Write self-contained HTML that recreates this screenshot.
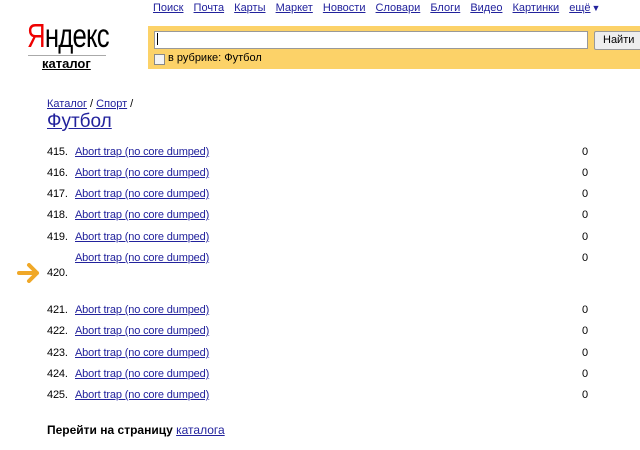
<!DOCTYPE html>
<html><head><meta charset="utf-8"><style>
*{margin:0;padding:0}
body{width:640px;height:450px;background:#fff;font-family:"Liberation Sans",Arial,sans-serif;font-size:11px;color:#000;position:relative;overflow:hidden}
a{color:#22229c;text-decoration:underline}
.abs{position:absolute;white-space:nowrap}
.nav a{margin-right:7px;font-size:11px}
.row{position:absolute;left:47px;font-size:11px;letter-spacing:-0.15px}
.row .n{display:inline-block;width:28px}
.z{position:absolute;left:582px;font-size:11px}
</style></head><body>
<div class="abs nav" style="left:153px;top:2px"><a>Поиск</a> <a>Почта</a> <a>Карты</a> <a>Маркет</a> <a>Новости</a> <a>Словари</a> <a>Блоги</a> <a>Видео</a> <a>Картинки</a> <a>ещё</a><span style="color:#22229c;font-size:9px;margin-left:-6px">▼</span></div>
<div class="abs" style="left:27px;top:17px;font-size:33px;line-height:38px;letter-spacing:-1px;transform:scaleX(0.78);transform-origin:left"><span style="color:#e00">Я</span>ндекс</div>
<div class="abs" style="left:28px;top:55px;width:78px;height:1px;background:#aaa"></div>
<div class="abs" style="left:42px;top:56px;font-size:13px;font-weight:bold;text-decoration:underline">каталог</div>
<div class="abs" style="left:148px;top:26px;width:492px;height:43px;background:#fcd268"></div>
<div class="abs" style="left:154px;top:31px;width:432px;height:16px;background:#fff;border:1px solid #999"></div>
<div class="abs" style="left:157px;top:33px;width:1px;height:12px;background:#000"></div>
<div class="abs" style="left:594px;top:31px;width:50px;height:17px;background:#eee;border:1px solid #999;border-radius:2px;font-size:11px;line-height:17px;padding-left:8px">Найти</div>
<div class="abs" style="left:154px;top:54px;width:9px;height:9px;border:1px solid #888;background:#f4f4f4"></div>
<div class="abs" style="left:168px;top:52px">в рубрике: Футбол</div>
<div class="abs" style="left:47px;top:98px"><a>Каталог</a> / <a>Спорт</a> /</div>
<div class="abs" style="left:47px;top:111px;font-size:19px"><a>Футбол</a></div>
<div class="row" style="top:146px"><span class="n">415.</span><a>Abort trap (no core dumped)</a></div><div class="z" style="top:146px">0</div>
<div class="row" style="top:167px"><span class="n">416.</span><a>Abort trap (no core dumped)</a></div><div class="z" style="top:167px">0</div>
<div class="row" style="top:188px"><span class="n">417.</span><a>Abort trap (no core dumped)</a></div><div class="z" style="top:188px">0</div>
<div class="row" style="top:209px"><span class="n">418.</span><a>Abort trap (no core dumped)</a></div><div class="z" style="top:209px">0</div>
<div class="row" style="top:231px"><span class="n">419.</span><a>Abort trap (no core dumped)</a></div><div class="z" style="top:231px">0</div>
<div class="row" style="top:252px"><span class="n"></span><a>Abort trap (no core dumped)</a></div><div class="z" style="top:252px">0</div>
<svg class="abs" style="left:17px;top:263px" width="24" height="20" viewBox="0 0 24 20"><path d="M2 10H20M12 2L20 10L12 18" stroke="#f0a828" stroke-width="4" fill="none" stroke-linecap="round" stroke-linejoin="round"/></svg>
<div class="row" style="top:267px">420.</div>
<div class="row" style="top:304px"><span class="n">421.</span><a>Abort trap (no core dumped)</a></div><div class="z" style="top:304px">0</div>
<div class="row" style="top:325px"><span class="n">422.</span><a>Abort trap (no core dumped)</a></div><div class="z" style="top:325px">0</div>
<div class="row" style="top:347px"><span class="n">423.</span><a>Abort trap (no core dumped)</a></div><div class="z" style="top:347px">0</div>
<div class="row" style="top:368px"><span class="n">424.</span><a>Abort trap (no core dumped)</a></div><div class="z" style="top:368px">0</div>
<div class="row" style="top:389px"><span class="n">425.</span><a>Abort trap (no core dumped)</a></div><div class="z" style="top:389px">0</div>
<div class="abs" style="left:47px;top:423px;font-size:12px"><b>Перейти на страницу</b> <a>каталога</a></div>
</body></html>
